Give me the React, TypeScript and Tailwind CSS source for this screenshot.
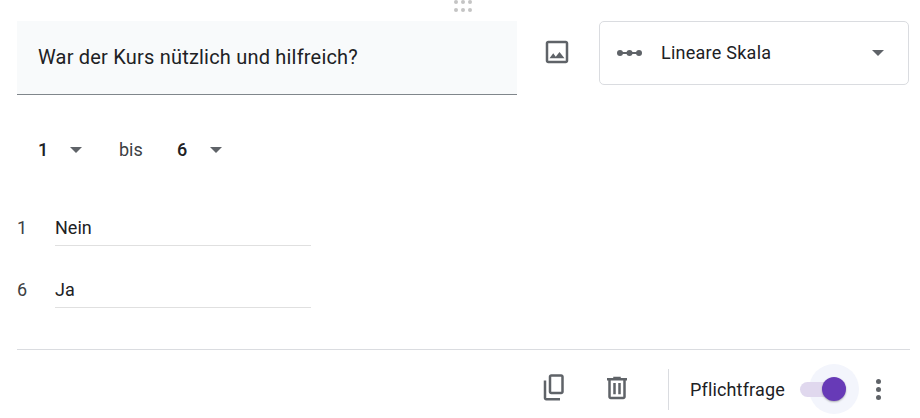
const font = { fontFamily: "Roboto, sans-serif" };

function Caret({ className = "" }: { className?: string }) {
  return (
    <span
      className={`h-0 w-0 shrink-0 border-x-[6px] border-t-[6px] border-x-transparent border-t-[#5f6368] ${className}`}
    />
  );
}

function ImageIcon() {
  return (
    <svg width="30" height="30" viewBox="0 0 24 24" fill="#5f6368">
      <path d="M19 3H5c-1.1 0-2 .9-2 2v14c0 1.1.9 2 2 2h14c1.1 0 2-.9 2-2V5c0-1.1-.9-2-2-2zm0 16H5V5h14v14zm-5-7l-3 3.72L9 13l-3 4h12l-4-5z" />
    </svg>
  );
}

function ScaleIcon() {
  return (
    <svg width="26" height="8" viewBox="0 0 26 8" fill="#5f6368">
      <rect x="2" y="3" width="22" height="2" />
      <circle cx="3" cy="4" r="3" />
      <circle cx="12.5" cy="4" r="3" />
      <circle cx="22" cy="4" r="3" />
    </svg>
  );
}

function CopyIcon() {
  return (
    <svg width="30" height="30" viewBox="0 0 24 24" fill="#5f6368">
      <path d="M17 1H9C7.9 1 7 1.9 7 3v12c0 1.1.9 2 2 2h8c1.1 0 2-.9 2-2V3c0-1.1-.9-2-2-2zm0 14H9V3h8v12zM3 6v14c0 1.1.9 2 2 2h11v-2H5V6H3z" />
    </svg>
  );
}

function TrashIcon() {
  return (
    <svg width="30" height="30" viewBox="0 0 24 24" fill="#5f6368">
      <path d="M15 4V3H9v1H4v2h1v13c0 1.1.9 2 2 2h10c1.1 0 2-.9 2-2V6h1V4h-5zm2 15H7V6h10v13zM9 8h2v9H9V8zm4 0h2v9h-2V8z" />
    </svg>
  );
}

function Label({ num, text }: { num: string; text: string }) {
  return (
    <div className="flex items-start">
      <span className="w-[38px] pt-[2px] text-[18px] leading-[24px] text-[#3c4043]">{num}</span>
      <div className="w-[256px] border-b border-[#e0e0e0] pt-[2px] pb-[5px] text-[18px] leading-[24px] text-[#202124]">
        {text}
      </div>
    </div>
  );
}

export default function App() {
  return (
    <div className="relative h-[418px] w-[920px] overflow-hidden bg-white" style={font}>
      {/* drag handle */}
      <div className="absolute left-[454px] top-[0px] grid grid-cols-3 gap-x-[3px] gap-y-[4px]">
        {[0, 1, 2, 3, 4, 5].map((i) => (
          <span key={i} className="h-[4px] w-[4px] rounded-full bg-[#c4c4c4]" />
        ))}
      </div>

      <div className="flex flex-col pl-[17px] pr-[10px] pt-[21px]">
        {/* title row */}
        <div className="flex items-start">
          <div className="flex h-[74px] w-[500px] items-center border-b border-[#80868b] bg-[#f8fafb] pb-[2px] pl-[21px] text-[20px] tracking-[0.2px] text-[#202124]">
            War der Kurs nützlich und hilfreich?
          </div>
          <div className="ml-[25px] mt-[16px] flex h-[30px] w-[30px] items-center justify-center">
            <ImageIcon />
          </div>
          <div className="ml-[27px] flex h-[64px] w-[310px] items-center rounded-[5px] border border-[#dadce0] pl-[17px] pr-[24px]">
            <ScaleIcon />
            <span className="ml-[18px] flex-1 pb-[2px] text-[18px] tracking-[0.25px] text-[#202124]">Lineare Skala</span>
            <Caret />
          </div>
        </div>

        {/* range row */}
        <div className="mt-[43px] flex h-[24px] items-center pl-[21px] text-[18px] leading-[24px]">
          <span className="w-[32px] font-medium text-[#202124]">1</span>
          <Caret />
          <span className="ml-[37px] w-[58px] text-[#3c4043]">bis</span>
          <span className="w-[33px] font-medium text-[#202124]">6</span>
          <Caret />
        </div>

        {/* labels */}
        <div className="mt-[52px] flex flex-col gap-[30px]">
          <Label num="1" text="Nein" />
          <Label num="6" text="Ja" />
        </div>

        {/* footer */}
        <div className="mt-[41px] flex h-[80px] shrink-0 items-center border-t border-[#dadce0]">
          <div className="mb-[3px] ml-[523px] flex h-[30px] w-[30px] items-center justify-center"><CopyIcon /></div>
          <div className="mb-[3px] ml-[32px] flex h-[30px] w-[30px] items-center justify-center"><TrashIcon /></div>
          <div className="ml-[36px] h-[41px] w-px bg-[#dadce0]" />
          <span className="ml-[21px] whitespace-nowrap text-[18px] tracking-[0.15px] text-[#202124]">Pflichtfrage</span>
          <div className="relative ml-[15px] h-[15px] w-[36px] shrink-0">
            <span className="absolute left-[9px] top-[-18px] h-[50px] w-[50px] rounded-full bg-[#f3f5fc]" />
            <span className="absolute inset-0 rounded-full bg-[#e0d8ee]" />
            <span className="absolute left-[22px] top-[-5px] h-[24px] w-[24px] rounded-full bg-[#673ab7] shadow-[0_1px_2px_rgba(0,0,0,0.3)]" />
          </div>
          <div className="mb-[1px] ml-[40px] flex shrink-0 flex-col gap-[3px]">
            <span className="h-[5px] w-[5px] rounded-full bg-[#5f6368]" />
            <span className="h-[5px] w-[5px] rounded-full bg-[#5f6368]" />
            <span className="h-[5px] w-[5px] rounded-full bg-[#5f6368]" />
          </div>
        </div>
      </div>
    </div>
  );
}
